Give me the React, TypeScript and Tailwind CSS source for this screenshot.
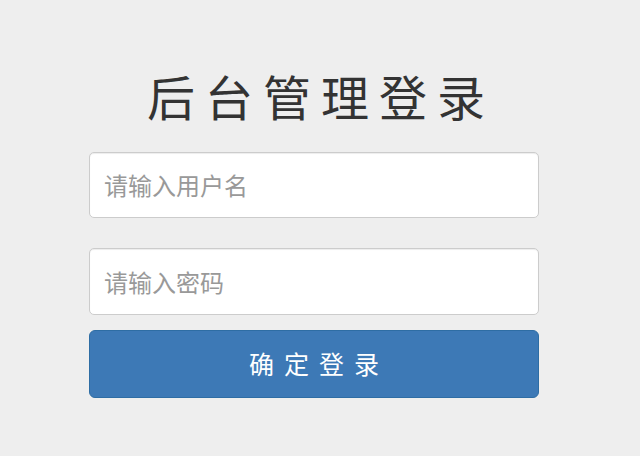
import React from "react";

export default function App() {
  return (
    <div
      className="w-[640px] h-[456px] bg-[#eeeeee] overflow-hidden"
      style={{ fontFamily: '"Noto Sans CJK SC", "Noto Sans", sans-serif' }}
    >
      <div className="pt-[64px] flex flex-col">
        <h1 className="text-[48px] leading-[62px] text-[#333333] tracking-[10px] text-center pl-[2px] font-normal">
          后台管理登录
        </h1>
        <div className="ml-[89px] w-[450px] mt-[26px] flex flex-col">
          <div className="h-[66px] bg-white border border-[#cccccc] rounded-[5px] shadow-[inset_0_1px_1px_rgba(0,0,0,0.075)] flex items-center px-[14px]">
            <span className="text-[24px] text-[#999999] leading-none">请输入用户名</span>
          </div>
          <div className="mt-[30px] h-[67px] bg-white border border-[#cccccc] rounded-[5px] shadow-[inset_0_1px_1px_rgba(0,0,0,0.075)] flex items-center px-[14px]">
            <span className="text-[24px] text-[#999999] leading-none">请输入密码</span>
          </div>
          <button className="mt-[15px] h-[68px] bg-[#3d79b6] border border-[#2e6da4] rounded-[6px] text-white text-[25px] tracking-[10px] pl-[10px] flex items-center justify-center">
            确定登录
          </button>
        </div>
      </div>
    </div>
  );
}
